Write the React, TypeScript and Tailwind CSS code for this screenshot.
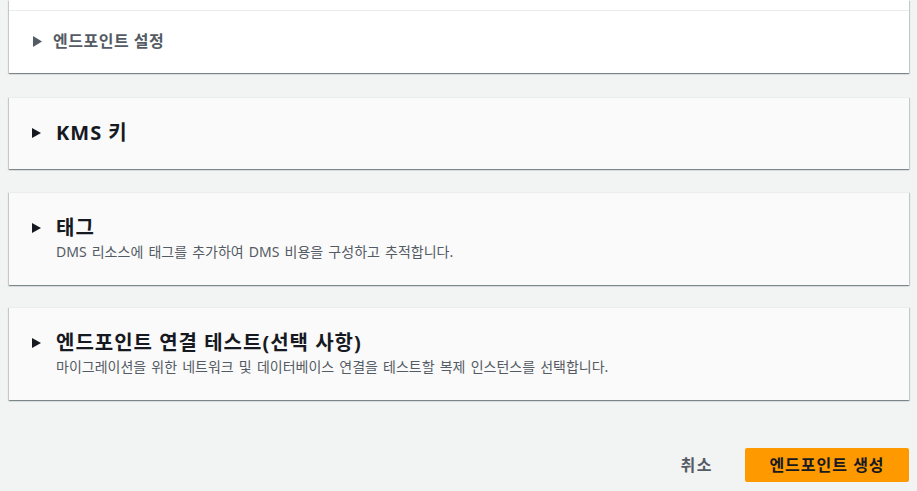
import React from "react";

const FONT = { fontFamily: '"Noto Sans", "Noto Sans CJK KR", sans-serif' };

function Caret({ muted }: { muted?: boolean }) {
  return muted ? (
    <svg width="9" height="11" viewBox="0 0 9 11" className="shrink-0">
      <path d="M0 0 L9 5.5 L0 11 Z" fill="#545b64" />
    </svg>
  ) : (
    <svg width="9" height="10" viewBox="0 0 9 10" className="shrink-0">
      <path d="M0 0 L9 5 L0 10 Z" fill="#16191f" />
    </svg>
  );
}

interface SectionProps {
  title: string;
  description?: string;
  className?: string;
}

function Section({ title, description, className }: SectionProps) {
  return (
    <div
      className={`bg-[#fafafa] border-t border-[#eaeded] shadow-[0_1px_1px_0_rgba(0,28,36,0.3),1px_1px_1px_0_rgba(0,28,36,0.15),-1px_1px_1px_0_rgba(0,28,36,0.15)] pl-[23px] pr-5 pt-[24px] ${className ?? ""}`}
    >
      <div className="flex items-center h-[22px]">
        <Caret />
        <h2 className="ml-[15px] text-[20px] leading-[22px] font-bold tracking-[1px] text-[#16191f]">
          {title}
        </h2>
      </div>
      {description && (
        <p className="ml-[24px] mt-[5px] text-[14px] leading-[16px] [word-spacing:1.5px] text-[#545b64]">
          {description}
        </p>
      )}
    </div>
  );
}

export default function App() {
  return (
    <div className="min-h-[491px] bg-[#f2f3f3] pl-[9px] pr-[8px] overflow-hidden" style={FONT}>
      {/* Endpoint config card, top clipped */}
      <div className="bg-white h-[73px] shadow-[0_1px_1px_0_rgba(0,28,36,0.3),1px_1px_1px_0_rgba(0,28,36,0.15),-1px_1px_1px_0_rgba(0,28,36,0.15)]">
        <div className="h-[10px]" />
        <div className="border-t border-[#eaeded] h-[63px] flex items-center pl-[24px] pb-[2px]">
          <Caret muted />
          <span className="ml-[11px] text-[16px] font-bold tracking-[0.5px] text-[#545b64]">엔드포인트 설정</span>
        </div>
      </div>

      <Section title="KMS 키" className="mt-[24px] h-[72px]" />
      <Section
        title="태그"
        description="DMS 리소스에 태그를 추가하여 DMS 비용을 구성하고 추적합니다."
        className="mt-[23px] h-[93px]"
      />
      <Section
        title="엔드포인트 연결 테스트(선택 사항)"
        description="마이그레이션을 위한 네트워크 및 데이터베이스 연결을 테스트할 복제 인스턴스를 선택합니다."
        className="mt-[22px] h-[93px]"
      />

      <div className="flex items-center justify-end mt-[48px] gap-[32px]">
        <button className="text-[16px] font-bold tracking-[1.5px] text-[#545b64]">취소</button>
        <button className="h-[34px] w-[164px] rounded-[2px] bg-[#ff9900] text-[16px] font-bold tracking-[1px] text-[#16191f]">
          엔드포인트 생성
        </button>
      </div>
    </div>
  );
}
